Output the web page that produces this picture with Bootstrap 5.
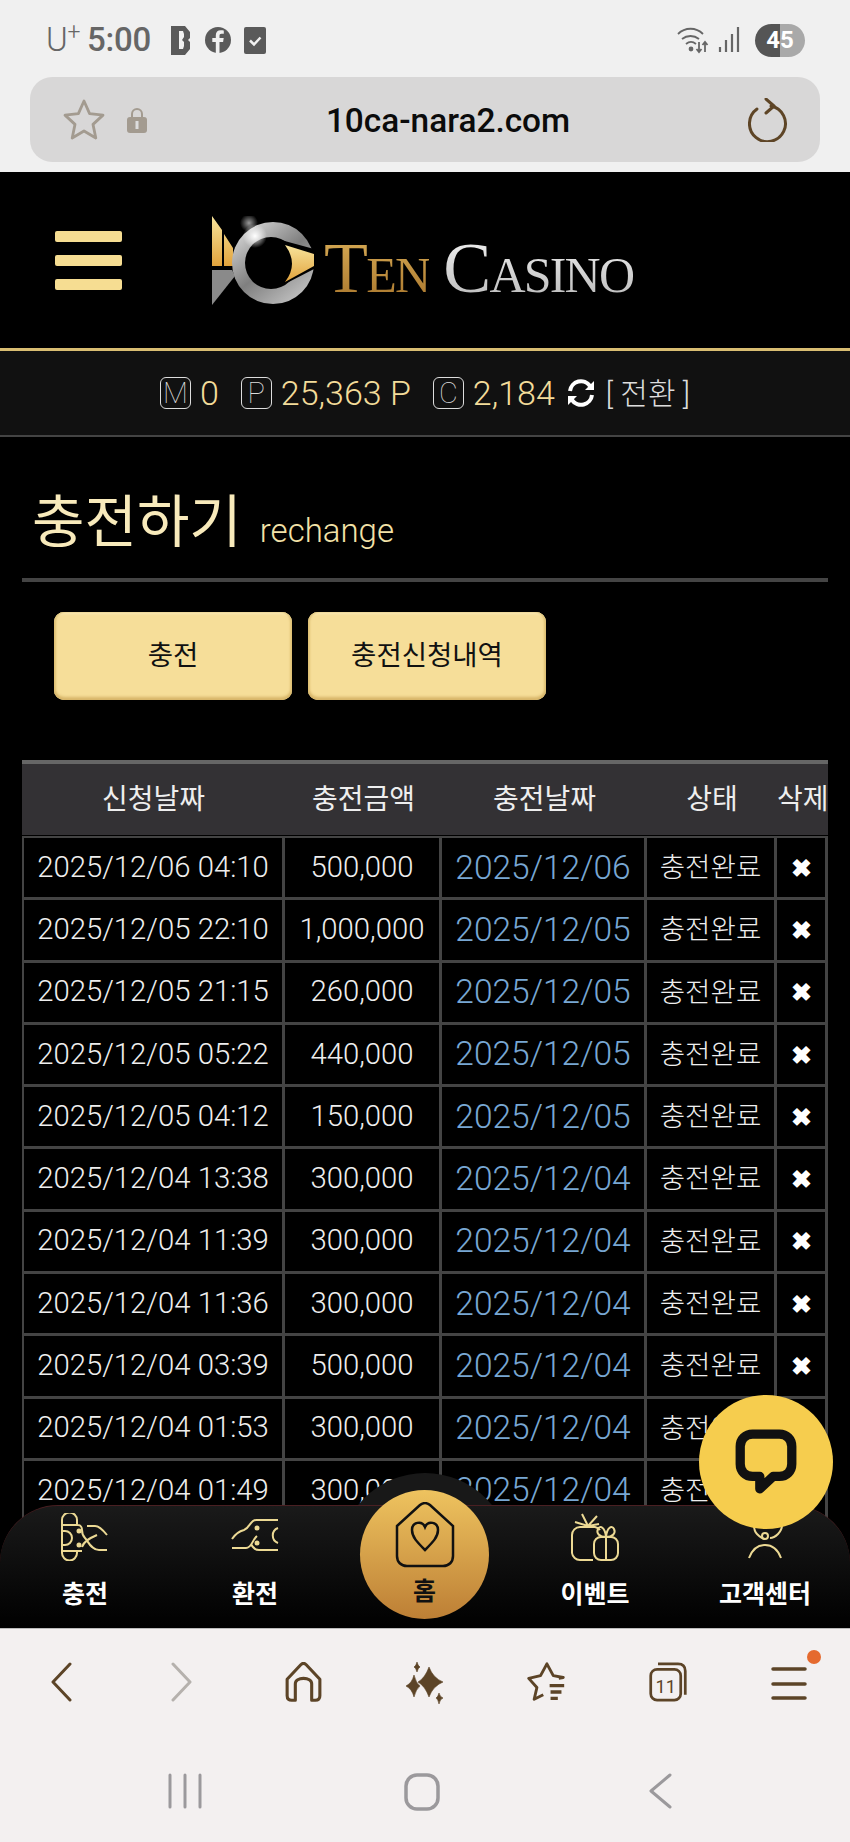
<!DOCTYPE html>
<html lang="ko"><head><meta charset="utf-8">
<link href="https://cdn.jsdelivr.net/npm/bootstrap@5.3.0/dist/css/bootstrap.min.css" rel="stylesheet">
<style>
html,body{height:100%;}
body{width:850px;height:1842px;overflow:hidden;background:#000;font-family:Roboto,"Noto Sans CJK KR",sans-serif;color:#fff;}
.shell{height:1842px;}
.status-strip{height:77px;background:#f0f0f0;padding:3px 45px 0 46px;color:#666;}
.st-left{font-size:33px;font-weight:500;letter-spacing:-.3px;}
.st-u{font-weight:300;font-size:33px;margin-right:7px;}
.st-u sup{font-size:23px;top:-.5em;}
.st-b{margin-left:19px;}
.st-f{margin-left:14px;}
.st-c{margin-left:13px;}
.url-wrap{height:95px;background:#f0f0f0;padding:0 30px 10px;}
.url-pill{height:85px;background:#d8d7d7;border-radius:22px;padding:0 32px;}
.url-text{font-size:33.400px;font-weight:500;color:#0b0b0b;left:46px;right:0;text-align:center;top:19px;}
.web-area{height:1456px;background:#000;overflow:hidden;}
.top-head{height:176px;padding-left:55px;gap:89px;}
.burger{width:67px;gap:13px;}
.burger i{display:block;height:11px;background:#f6dd92;border-radius:2px;}
.logo-box{padding-top:2px;}
.logo-ten,.logo-cas{font-family:"Liberation Serif",serif;font-size:72px;line-height:1;letter-spacing:-1.800px;font-variant:small-caps;-webkit-background-clip:text;background-clip:text;color:transparent;padding-top:14px;}
.logo-ten{background-image:linear-gradient(#e2b860,#a9762c);margin-left:10px;}
.logo-cas{background-image:linear-gradient(#fff,#b9b9b9);margin-left:14px;}
.points{height:89px;background:#111;border-top:3px solid #d9bd72;border-bottom:2px solid #444;color:#f3dc9a;font-weight:300;font-size:34px;}
.pbox{display:inline-flex;align-items:center;justify-content:center;width:31px;height:32px;border:1.500px solid #ddd;border-radius:6px;color:#ddd;font-size:29px;font-weight:100;line-height:1;}
.pgroup{gap:9px;}
.pgroup+.pgroup{margin-left:22px;}
.swap{color:#ddd;font-size:30px;margin-left:11px;}
.spin{margin-left:12px;}
.page-title{padding:40px 0 0 32px;height:141px;color:#f8eabb;}
.page-title b{font-weight:400;font-size:57px;line-height:92px;}
.page-title span{font-weight:300;font-size:33px;margin-left:18px;color:#f3e2a8;}
.title-line{height:4px;background:#444;margin:0 22px;}
.tab-row{padding:30px 54px 0;gap:16px;height:178px;}
.gold-btn{width:238px;height:88px;background:#f6de99;color:#111;font-size:27.500px;border:0;border-radius:10px;box-shadow:inset 0 -3px 3px #d8b66a,inset -2px 0 2px #e2c67c,inset 2px 0 2px #e2c67c,inset 0 2px 2px #faecbc;padding:0;}
.hist{margin:0 22px;width:806px;table-layout:fixed;border-collapse:separate;border-spacing:0;}
.hist thead th{height:75px;background:#333134;border-top:4px solid #666;color:#eee;font-size:28px;font-weight:400;text-align:center;vertical-align:middle;padding:0;white-space:nowrap;}
.hist tbody tr.gap-row td{height:3px;padding:0;background:#000;border:0;border-bottom:2px solid #444;}
.hist tbody td{height:62.300px;background:#000;color:#eee;border-right:3px solid #444;border-bottom:3px solid #444;font-size:29.300px;font-weight:300;text-align:center;padding:0;white-space:nowrap;overflow:hidden;}
.hist tbody td:first-child{border-left:2px solid #444;}
.hist tbody td.blue{color:#78a7d3;font-size:33.500px;}
.hist tbody td.kr{font-size:27.600px;}
.x-mark{font-size:25px;font-weight:700;color:#fff;}
.bottom-tabs{left:0;right:0;top:1333px;height:123px;background:linear-gradient(#1a1a1a,#000);border-radius:58px 58px 0 0;border-top:1.500px solid #4a1f22;}
.tab-bump{left:339px;top:1301px;width:172px;height:172px;border-radius:50%;background:#181818;}
.tab-item{width:170px;color:#fff;font-weight:700;font-size:25px;padding-top:7px;}
.tab-item svg{display:block;height:48px;}
.tab-item span{margin-top:16px;line-height:36px;}
.home-disc{left:360px;top:1318px;width:129px;height:129px;border-radius:50%;background:linear-gradient(#eec35f,#bd7f35);color:#111;font-size:25px;font-weight:700;padding-top:12px;}
.chat-disc{left:699px;top:1223px;width:134px;height:134px;border-radius:50%;background:#f6cd4e;}
.browser-bar{height:214px;background:#f3f0f0;border-top:1px solid #bbb;}
.b-row1{height:144px;padding:33px 0 0;}
.b-cell{width:121.400px;}
.nav-row{padding-right:6px;}
.nav-cell{width:237.500px;}
.dot{width:14px;height:14px;}
</style></head>
<body>
<div class="shell d-flex flex-column">
  <div class="status-strip d-flex justify-content-between align-items-center">
    <div class="st-left d-flex align-items-center">
      <span class="st-u">U<sup>+</sup></span><span>5:00</span>
      <svg class="st-b" width="21" height="29" viewBox="0 0 21 29"><path d="M1 0h14l5 6v6l-2 2 2 2v7l-5 6H1z" fill="#5a5a5a"/><path d="M9 5h4l1 3v3l-2 3 2 2v4l-1 3H9z" fill="#f0f0f0"/></svg>
      <svg class="st-f" width="26" height="26" viewBox="0 0 26 26"><circle cx="13" cy="13" r="13" fill="#5a5a5a"/><path d="M14.500 26V15h3.600l.6-4h-4.200V8.800c0-1.200.5-2 2-2h2.300V3.400c-.6-.1-1.800-.2-3-.2-3.200 0-5 1.900-5 5V11H7.300v4h3.500v11z" fill="#f0f0f0"/></svg>
      <svg class="st-c" width="22" height="27" viewBox="0 0 22 27"><rect width="22" height="27" rx="2" fill="#5a5a5a"/><path d="M6 13.500l4 4 6.500-7" stroke="#f0f0f0" stroke-width="2.500" fill="none"/></svg>
    </div>
    <div class="d-flex align-items-center gap-2">
      <svg width="70" height="30" viewBox="0 0 70 30" fill="none" stroke="#666" stroke-width="1.800"><path d="M1 9c7-7 18-7 25 0M5 14c5-4 12-4 17 0M9 19c3-2.500 7-2.500 10 0"/><circle cx="14" cy="24" r="1.500" fill="#666"/><path d="M22 17v10M19.500 24l2.500 3 2.500-3M28 27V17M25.500 20l2.500-3 2.500 3"/><path d="M43 27v-5M49 27V15M55 27V9M61 27V2" stroke-width="2.200"/></svg>
      <div class="d-flex align-items-center justify-content-center text-white" style="width:50px;height:33px;border-radius:17px;background:linear-gradient(90deg,#555 50%,#a9a9a9 50%);font-size:24px;font-weight:700">45</div>
    </div>
  </div>
  <div class="url-wrap">
    <div class="url-pill d-flex align-items-center position-relative">
      <div class="url-text position-absolute">10ca-nara2.com</div>
      <svg class="position-relative" width="44" height="44" viewBox="0 0 44 44" fill="none"><path d="M22 3l5.600 12.600 13.400 1.500-10 9.300 2.800 13.600L22 33l-11.800 7 2.800-13.600-10-9.300 13.400-1.500z" stroke="#a39b90" stroke-width="2.800" stroke-linejoin="round"/></svg>
      <svg class="position-relative" style="margin-left:21px" width="20" height="28" viewBox="0 0 20 28"><path d="M5 12V8a5 5 0 0 1 10 0v4" stroke="#a39b90" stroke-width="2" fill="none"/><rect x="0" y="11" width="20" height="16" rx="3" fill="#a39b90"/><rect x="8.500" y="15" width="3" height="8" fill="#ddd"/></svg>
      <svg class="position-relative ms-auto" width="40" height="44" viewBox="0 0 40 44" fill="none" stroke="#5e4526" stroke-width="3" stroke-linecap="round" stroke-linejoin="round"><path d="M9 11a18 18 0 1 0 14-3"/><path d="M18 1l8 7-8 7"/></svg>
    </div>
  </div>
  <div class="web-area position-relative">
    <div class="top-head d-flex align-items-center">
      <div class="burger d-flex flex-column"><i></i><i></i><i></i></div>
      <div class="logo-box d-flex align-items-center">
        <svg width="103" height="90" viewBox="0 0 103 90">
          <defs>
            <linearGradient id="sil" x1="0" y1="0" x2=".8" y2="1"><stop offset="0" stop-color="#e8e8e8"/><stop offset=".55" stop-color="#7f7f7f"/><stop offset="1" stop-color="#c4c4c4"/></linearGradient>
            <linearGradient id="gld" x1="0" y1="0" x2="0" y2="1"><stop offset="0" stop-color="#f8e49c"/><stop offset="1" stop-color="#e2a33c"/></linearGradient>
            <radialGradient id="star"><stop offset="0" stop-color="#fff"/><stop offset="1" stop-color="#fff" stop-opacity="0"/></radialGradient>
          </defs>
          <path d="M1 0l10 14v36H1z M13 18l9 14v18H13z" fill="url(#gld)"/>
          <path d="M1 54h20l3 6L1 89z" fill="#8a8a8a"/>
          <circle cx="62" cy="47" r="41" fill="url(#sil)"/>
          <circle cx="60" cy="47" r="26" fill="#000"/>
          <path d="M70 24l33 9v20L70 70z" fill="#000"/>
          <path d="M74 29l29 9v12L74 66q14-18 0-37z" fill="url(#gld)"/>
          <circle cx="44" cy="20" r="12" fill="url(#star)"/>
          <circle cx="38" cy="7" r="9" fill="url(#star)" opacity=".6"/>
        </svg>
        <span class="logo-ten">Ten</span><span class="logo-cas">Casino</span>
      </div>
    </div>
    <div class="points d-flex align-items-center justify-content-center">
      <span class="pgroup d-flex align-items-center"><span class="pbox">M</span><span>0</span></span>
      <span class="pgroup d-flex align-items-center"><span class="pbox">P</span><span>25,363 P</span></span>
      <span class="pgroup d-flex align-items-center"><span class="pbox">C</span><span>2,184</span></span>
      <svg class="spin" width="28" height="30" viewBox="0 0 28 30" fill="none" stroke="#fff" stroke-width="4"><path d="M3 13a11 11 0 0 1 20-5"/><path d="M25 17a11 11 0 0 1-20 5"/><path d="M27 3v9h-9z" fill="#fff" stroke="none"/><path d="M1 27v-9h9z" fill="#fff" stroke="none"/></svg>
      <span class="swap">[ 전환 ]</span>
    </div>
    <div class="page-title"><b>충전하기</b><span>rechange</span></div>
    <div class="title-line"></div>
    <div class="tab-row d-flex">
      <button class="btn gold-btn">충전</button>
      <button class="btn gold-btn">충전신청내역</button>
    </div>
    <table class="hist">
      <colgroup><col style="width:263px"><col style="width:157px"><col style="width:205px"><col style="width:130px"><col style="width:51px"></colgroup>
      <thead><tr><th>신청날짜</th><th>충전금액</th><th>충전날짜</th><th>상태</th><th>삭제</th></tr></thead>
      <tbody id="rows"><tr class="gap-row"><td colspan="5"></td></tr></tbody>
    </table>
    <div class="tab-bump position-absolute"></div>
    <div class="bottom-tabs position-absolute d-flex">
      <div class="tab-item d-flex flex-column align-items-center">
        <svg width="48" height="48" viewBox="0 0 48 48" fill="none" stroke="#ecd994" stroke-width="2"><path d="M1 12V7a7.500 7.500 0 0 1 15 0v5M1 12v28a7.500 7.500 0 0 0 15 0v-3M1 12h16c3 0 4 3 4 5 0 3 1 6 3 8M1 38h20M1 18h3a7 7 0 0 1 0 14H1M26 13h8c4 0 8 4 12 9M24 25c3 3 6 12 14 12h8M21 34c2-6 8-9 15-12"/><circle cx="18" cy="18" r="1.500" fill="#ecd994"/><circle cx="18" cy="32" r="1.500" fill="#ecd994"/></svg>
        <span>충전</span>
      </div>
      <div class="tab-item d-flex flex-column align-items-center">
        <svg width="48" height="48" viewBox="0 -4 48 48" fill="none" stroke="#ecd994" stroke-width="2"><path d="M47 3H25c-6 0-6 8-12 10-4 1-8 3-12 9M1 31h14c6 0 6-8 11-12M47 33H28c-4 0-6-2-8-6M47 11a8 8 0 0 0 0 15"/><circle cx="26" cy="11" r="1.500" fill="#ecd994"/><circle cx="26" cy="26" r="1.500" fill="#ecd994"/></svg>
        <span>환전</span>
      </div>
      <div style="width:170px"></div>
      <div class="tab-item d-flex flex-column align-items-center">
        <svg width="48" height="48" viewBox="0 0 48 48" fill="none" stroke="#ecd994" stroke-width="2"><path d="M29 17a8 8 0 0 0-5-3H9a8 8 0 0 0-8 8v18a8 8 0 0 0 8 7h13"/><path d="M11 1l6 12 9-10M4 9l13 4 11-2"/><rect x="23" y="24" width="24" height="23" rx="7"/><path d="M35 24v23M35 24c-7 0-10-4-8-8s7-2 8 8c1-10 6-12 8-8s-1 8-8 8z"/></svg>
        <span>이벤트</span>
      </div>
      <div class="tab-item d-flex flex-column align-items-center">
        <svg width="48" height="48" viewBox="0 0 48 48" fill="none" stroke="#ecd994" stroke-width="2"><path d="M13 8v4c0 4 1 7 3 9s5 5 8 5M41 8v4c0 4-2 7-4 9s-4 4-8 4"/><circle cx="24" cy="23" r="3"/><path d="M8 45c3-8 8-13 16-13s13 5 16 13"/></svg>
        <span>고객센터</span>
      </div>
    </div>
    <div class="home-disc position-absolute d-flex flex-column align-items-center">
      <svg width="62" height="66" viewBox="0 0 62 66" fill="none" stroke="#111" stroke-width="2.500"><path d="M3 24L26 3c3-2.500 7-2.500 10 0l23 21v30c0 6-4 10-10 10H13C7 64 3 60 3 54z"/><path d="M31 48c-8-8-13-13-13-20 0-8 10-10 13-3 3-7 13-5 13 3 0 7-5 12-13 20z"/></svg>
      <span class="mt-2 lh-sm">홈</span>
    </div>
    <div class="chat-disc position-absolute d-flex align-items-center justify-content-center">
      <svg width="64" height="66" viewBox="0 0 62 64" fill="none"><path d="M18 5h26c7 0 12 5 12 12v17c0 7-5 12-12 12h-6L25 58V46h-7C11 46 6 41 6 34V17C6 10 11 5 18 5z" stroke="#111" stroke-width="9" stroke-linejoin="round"/></svg>
    </div>
  </div>
  <div class="browser-bar">
    <div class="b-row1 d-flex align-items-start">
      <div class="b-cell text-center"><svg width="22" height="40" viewBox="0 0 22 40" fill="none" stroke="#5c4427" stroke-width="3" stroke-linecap="round" stroke-linejoin="round"><path d="M20 2L3 20l17 18"/></svg></div>
      <div class="b-cell text-center"><svg width="22" height="40" viewBox="0 0 22 40" fill="none" stroke="#b5b1ad" stroke-width="3" stroke-linecap="round" stroke-linejoin="round"><path d="M2 2l17 18L2 38"/></svg></div>
      <div class="b-cell text-center"><svg width="37" height="40" viewBox="0 0 40 44" fill="none" stroke="#5c4427" stroke-width="3.400" stroke-linejoin="round"><path d="M2 19L17 3c2-2 4-2 6 0l15 16v18c0 4-2 5-5 5h-4V24c0-4-4-6-9-6s-9 2-9 6v18H7c-3 0-5-1-5-5z"/></svg></div>
      <div class="b-cell text-center"><svg width="37" height="42" viewBox="0 0 37 42" fill="#5c4427" stroke="#5c4427" stroke-width=".6"><path d="M23 5Q27 16 37 20 27 24 23 35 19 24 12 20 19 16 23 5zM8 13Q10 21 14 24 10 27 8 35 6 27 0 24 6 21 8 13zM11 0Q12 4 14 5 12 6 11 10 10 6 8 5 10 4 11 0zM33 31Q34 35 37 36 34 37 33 42 32 37 30 36 32 35 33 31z"/></svg></div>
      <div class="b-cell text-center"><svg width="44" height="40" viewBox="0 0 44 44" fill="none" stroke="#5c4427" stroke-width="3.200" stroke-linejoin="round"><path d="M36 18l5-1-11-2-7-13-7 13-13 3 9 10-3 13 10-5"/><path d="M26 26h16M27 33h12M27 40h8" stroke-width="3.600"/></svg></div>
      <div class="b-cell text-center"><svg width="40" height="40" viewBox="0 0 42 44" fill="none" stroke="#5c4427" stroke-width="3"><path d="M10 2h22c5 0 8 3 8 8v26"/><rect x="2" y="8" width="33" height="34" rx="7"/><text x="18.500" y="34" font-family="Roboto" font-size="20" font-weight="400" fill="#5c4427" stroke="none" text-anchor="middle">11</text></svg></div>
      <div class="b-cell text-center position-relative"><svg width="36" height="36" viewBox="0 0 36 36" class="mt-1" fill="none" stroke="#5c4427" stroke-width="3.500" stroke-linecap="round"><path d="M2 3h32M2 18h32M2 32h32"/></svg><span class="position-absolute rounded-circle dot" style="background:#e56a2e;left:79px;top:-12px"></span></div>
    </div>
    <div class="nav-row d-flex justify-content-center">
      <div class="nav-cell text-center"><svg width="34" height="36" viewBox="0 0 34 36" stroke="#9b999c" stroke-width="3" stroke-linecap="round"><path d="M2 2v32M17 2v32M32 2v32"/></svg></div>
      <div class="nav-cell text-center"><svg width="36" height="38" viewBox="0 0 36 38" fill="none" stroke="#9b999c" stroke-width="3.500"><rect x="2" y="2" width="32" height="34" rx="11"/></svg></div>
      <div class="nav-cell text-center"><svg width="24" height="36" viewBox="0 0 24 36" fill="none" stroke="#9b999c" stroke-width="3" stroke-linecap="round" stroke-linejoin="round"><path d="M22 2L3 18l19 16"/></svg></div>
    </div>
  </div>
</div>
<script>
var d=[["2025/12/06 04:10","500,000","2025/12/06"],["2025/12/05 22:10","1,000,000","2025/12/05"],["2025/12/05 21:15","260,000","2025/12/05"],["2025/12/05 05:22","440,000","2025/12/05"],["2025/12/05 04:12","150,000","2025/12/05"],["2025/12/04 13:38","300,000","2025/12/04"],["2025/12/04 11:39","300,000","2025/12/04"],["2025/12/04 11:36","300,000","2025/12/04"],["2025/12/04 03:39","500,000","2025/12/04"],["2025/12/04 01:53","300,000","2025/12/04"],["2025/12/04 01:49","300,000","2025/12/04"]];
var t=document.getElementById('rows');
d.forEach(function(r){var tr=document.createElement('tr');tr.innerHTML='<td>'+r[0]+'</td><td>'+r[1]+'</td><td class="blue">'+r[2]+'</td><td class="kr">충전완료</td><td><span class="x-mark">✖</span></td>';t.appendChild(tr);});
</script>
<script src="https://cdn.jsdelivr.net/npm/bootstrap@5.3.0/dist/js/bootstrap.bundle.min.js"></script>
</body></html>
